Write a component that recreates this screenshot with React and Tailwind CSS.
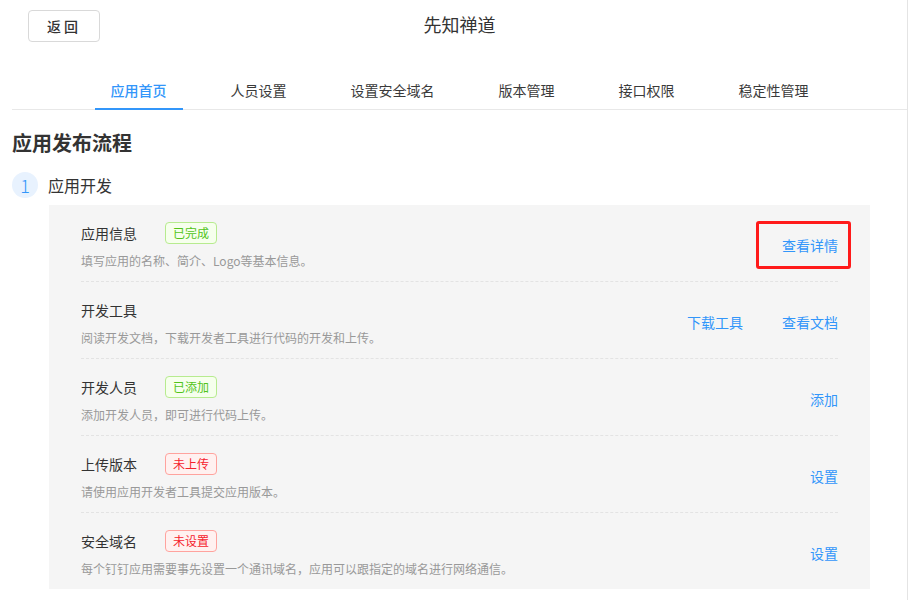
import React from "react";

const font = { fontFamily: '"Noto Sans CJK SC", "Noto Sans", sans-serif' };

const tabs = ["应用首页", "人员设置", "设置安全域名", "版本管理", "接口权限", "稳定性管理"];

const rows = [
  { title: "应用信息", badge: { text: "已完成", kind: "ok" }, desc: "填写应用的名称、简介、Logo等基本信息。", links: ["查看详情"], highlight: true },
  { title: "开发工具", desc: "阅读开发文档，下载开发者工具进行代码的开发和上传。", links: ["下载工具", "查看文档"] },
  { title: "开发人员", badge: { text: "已添加", kind: "ok" }, desc: "添加开发人员，即可进行代码上传。", links: ["添加"] },
  { title: "上传版本", badge: { text: "未上传", kind: "bad" }, desc: "请使用应用开发者工具提交应用版本。", links: ["设置"] },
  { title: "安全域名", badge: { text: "未设置", kind: "bad" }, desc: "每个钉钉应用需要事先设置一个通讯域名，应用可以跟指定的域名进行网络通信。", links: ["设置"] },
];

function Badge({ text, kind }) {
  const cls =
    kind === "ok"
      ? "border-[#b7eb8f] bg-[#f6ffed] text-[#52c41a]"
      : "border-[#ffa39e] bg-[#fff1f0] text-[#f5222d]";
  return (
    <span className={`inline-flex h-[22px] items-center rounded-[4px] border px-[7px] text-[12px] leading-[20px] ${cls}`}>
      {text}
    </span>
  );
}

export default function App() {
  return (
    <div className="w-[908px] h-[600px] overflow-hidden bg-white" style={font}>
      <div className="ml-[12px] w-[896px] h-full border-r border-[#e4e4e4] text-[#333]">
        {/* header */}
        <div className="grid grid-cols-[1fr_auto_1fr] items-start pt-[10px]">
          <div>
            <button className="ml-[16px] flex h-[32px] w-[72px] items-center justify-center rounded-[4px] border border-[#d9d9d9] bg-white text-[14px] font-medium text-[#333] tracking-[3px]">
              返回
            </button>
          </div>
          <div className="pt-[2px] text-[18px] leading-[24px] text-[#333]">先知禅道</div>
          <div />
        </div>
        {/* tabs */}
        <div className="mt-[38px] flex justify-center gap-8 border-b border-[#e8e8e8]">
          {tabs.map((t, i) => (
            <div
              key={t}
              className={`-mb-px px-4 pb-[8px] text-[14px] leading-[20px] border-b-2 ${
                i === 0 ? "border-[#3296fa] text-[#3296fa] font-medium" : "border-transparent text-[#3a3a3a]"
              }`}
            >
              {t}
            </div>
          ))}
        </div>
        {/* heading */}
        <div className="mt-[19px] text-[20px] font-semibold leading-[28px] text-[#333]">应用发布流程</div>
        <div className="mt-[15px] flex items-center">
          <div className="flex h-[26px] w-[26px] items-center justify-center rounded-full bg-[#e8f2fe] text-[18px] font-light leading-none text-[#3296fa]">
            1
          </div>
          <div className="ml-[10px] text-[16px] leading-[24px] text-[#333]">应用开发</div>
        </div>
        {/* panel */}
        <div className="ml-[37px] mt-[7px] w-[821px] bg-[#f5f5f5] px-[32px]">
          {rows.map((r, i) => (
            <div
              key={r.title}
              className={`flex items-center justify-between pt-[17px] pb-[10px] ${
                i < rows.length - 1 ? "border-b border-dashed border-[#e3e3e3]" : ""
              }`}
            >
              <div>
                <div className="flex h-[22px] items-center">
                  <span className="w-[84px] text-[14px] leading-[20px] text-[#333]">{r.title}</span>
                  {r.badge && <Badge {...r.badge} />}
                </div>
                <div className="mt-[7px] text-[12px] leading-[20px] text-[#999]">{r.desc}</div>
              </div>
              <div className="flex gap-[39px] pb-[4px]">
                {r.links.map((l) => (
                  <div key={l} className="relative h-[20px] text-[14px] leading-[20px] text-[#3296fa]">
                    {l}
                    {r.highlight && (
                      <div className="pointer-events-none absolute left-[-26px] right-[-13px] top-[-14px] bottom-[-14px] rounded-[3px] border-[3px] border-[#ff1a1a]" />
                    )}
                  </div>
                ))}
              </div>
            </div>
          ))}
        </div>
      </div>
    </div>
  );
}
